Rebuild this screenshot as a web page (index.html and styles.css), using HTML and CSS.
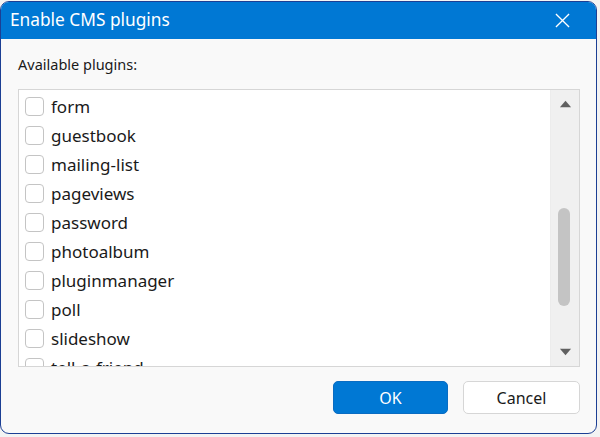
FILE: index.html
```html
<!DOCTYPE html>
<html>
<head>
<meta charset="utf-8">
<link rel="stylesheet" href="styles.css">
</head>
<body>
<div class="dialog">
  <div class="titlebar">
    <span class="title">Enable CMS plugins</span>
    <svg class="close" width="16" height="16" viewBox="0 0 16 16"><path d="M1 1 L15 15 M15 1 L1 15" stroke="#fff" stroke-width="1.4" fill="none"/></svg>
  </div>
  <div class="body">
    <div class="label">Available plugins:</div>
    <div class="listbox">
      <div class="items">
        <div class="item"><span class="cb"></span><span>form</span></div>
        <div class="item"><span class="cb"></span><span>guestbook</span></div>
        <div class="item"><span class="cb"></span><span>mailing-list</span></div>
        <div class="item"><span class="cb"></span><span>pageviews</span></div>
        <div class="item"><span class="cb"></span><span>password</span></div>
        <div class="item"><span class="cb"></span><span>photoalbum</span></div>
        <div class="item"><span class="cb"></span><span>pluginmanager</span></div>
        <div class="item"><span class="cb"></span><span>poll</span></div>
        <div class="item"><span class="cb"></span><span>slideshow</span></div>
        <div class="item"><span class="cb"></span><span>tell-a-friend</span></div>
      </div>
      <div class="scrollbar">
        <svg class="arrow" width="14" height="10" viewBox="0 0 14 10"><path d="M0 9 L7 1 L14 9 Z" fill="#606060"/></svg>
        <div class="track"><div class="thumb"></div></div>
        <svg class="arrow" width="14" height="10" viewBox="0 0 14 10"><path d="M0 1 L7 9 L14 1 Z" fill="#606060"/></svg>
      </div>
    </div>
    <div class="buttons">
      <button class="btn primary">OK</button>
      <button class="btn cancel">Cancel</button>
    </div>
  </div>
</div>
</body>
</html>
```
FILE: styles.css
```css
html, body {
  margin: 0;
  padding: 0;
  background: #f3f3f3;
  font-family: "Noto Sans", "Open Sans", sans-serif;
}
.dialog {
  margin-top: 1px;
  width: 597px;
  height: 433px;
  border: 1px solid #1c3f94;
  border-radius: 9px;
  overflow: hidden;
  background: #f9f9f9;
  box-sizing: border-box;
  display: flex;
  flex-direction: column;
}
.titlebar {
  height: 37px;
  background: #0078d4;
  display: flex;
  align-items: center;
  justify-content: space-between;
  padding: 0 26px 0 9px;
  flex-shrink: 0;
}
.title {
  color: #fff;
  font-size: 17.3px;
  margin-top: -2px;
}
.close {
  display: block;
  width: 15px;
  height: 15px;
}
.body {
  flex: 1;
  padding: 0 16px 0 17px;
  display: flex;
  flex-direction: column;
}
.label {
  font-size: 14.5px;
  color: #1a1a1a;
  margin-top: 15px;
  height: 20px;
  line-height: 20px;
}
.listbox {
  margin-top: 15px;
  height: 278px;
  border: 1px solid #d6d6d6;
  background: #fff;
  display: flex;
  box-sizing: border-box;
  overflow: hidden;
}
.items {
  flex: 1;
  padding-top: 2px;
  padding-left: 6px;
}
.item {
  height: 29px;
  display: flex;
  align-items: center;
  font-size: 17px;
  color: #1a1a1a;
}
.cb {
  width: 17px;
  height: 17px;
  border: 1px solid #c4c4c4;
  border-radius: 4px;
  margin-right: 7px;
  flex-shrink: 0;
  background: #fff;
}
.scrollbar {
  width: 28px;
  background: #f0f0f0;
  border-left: 1px solid #ececec;
  display: flex;
  flex-direction: column;
  align-items: center;
}
.arrow {
  display: block;
  margin: 10px 0;
  width: 13px;
  height: 8px;
}
.track {
  flex: 1;
  width: 100%;
  position: relative;
}
.thumb {
  position: absolute;
  left: 7px;
  top: 90px;
  width: 12px;
  height: 98px;
  border-radius: 6px;
  background: #c4c4c4;
}
.buttons {
  display: flex;
  justify-content: flex-end;
  gap: 15px;
  margin-top: 14px;
}
.btn {
  width: 115px;
  height: 33px;
  border-radius: 5px;
  border: 1px solid #d6d6d6;
  background: #fff;
  font-family: "Noto Sans", "Open Sans", sans-serif;
  font-size: 16px;
  color: #1a1a1a;
  padding: 0;
}
.btn.cancel {
  width: 117px;
}
.btn.primary {
  background: #0078d4;
  border-color: #0a6cc2;
  color: #fff;
}
```
